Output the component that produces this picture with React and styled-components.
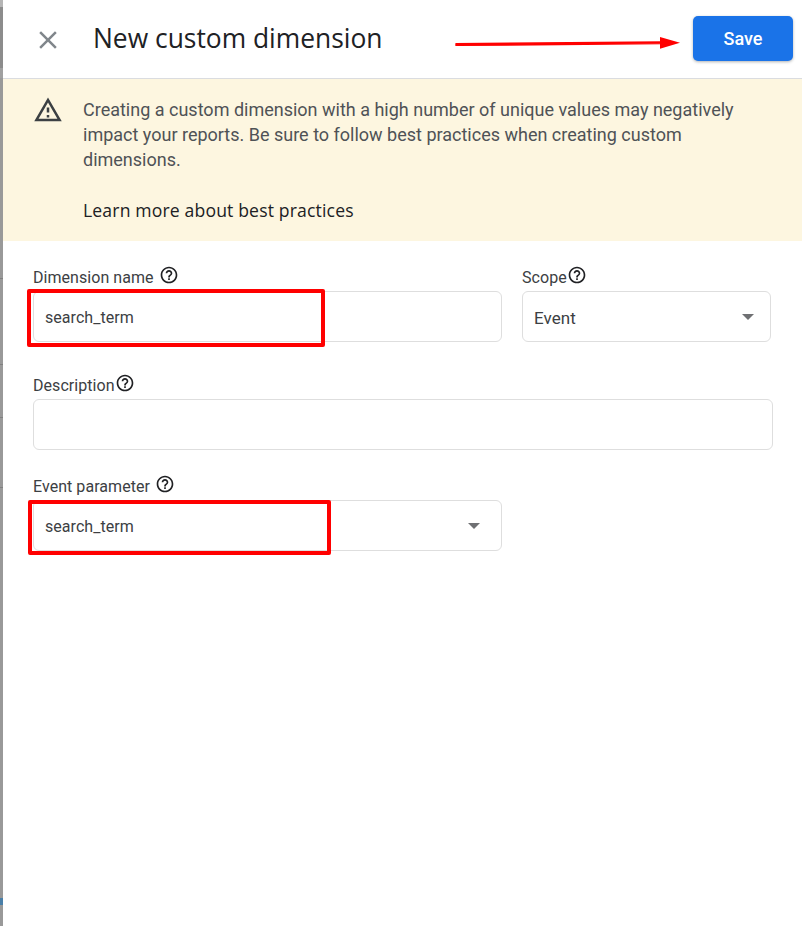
import styled, { createGlobalStyle } from "styled-components";

const GlobalStyle = createGlobalStyle`
  html, body {
    margin: 0;
    padding: 0;
    background: #ffffff;
    font-family: Roboto, "Liberation Sans", sans-serif;
  }
  * {
    box-sizing: border-box;
  }
`;

const HelpIcon = ({ className }) => (
  <svg className={className} width="20" height="20" viewBox="0 0 24 24" fill="#202124">
    <path d="M11 18h2v-2h-2v2zm1-16C6.48 2 2 6.48 2 12s4.48 10 10 10 10-4.48 10-10S17.52 2 12 2zm0 18c-4.41 0-8-3.59-8-8s3.59-8 8-8 8 3.59 8 8-3.59 8-8 8zm0-14c-2.21 0-4 1.79-4 4h2c0-1.1.9-2 2-2s2 .9 2 2c0 2-3 1.75-3 5h2c0-2.25 3-2.5 3-5 0-2.21-1.79-4-4-4z" />
  </svg>
);

const App = () => {
  return (
    <>
      <GlobalStyle />
      <Page>
        <Backdrop />
        <Panel>
          <Header>
            <CloseButton aria-label="Close">
              <svg width="30" height="30" viewBox="0 0 24 24" fill="#80868b">
                <path d="M19 6.41 17.59 5 12 10.59 6.41 5 5 6.41 10.59 12 5 17.59 6.41 19 12 13.41 17.59 19 19 17.59 13.41 12z" />
              </svg>
            </CloseButton>
            <Title>New custom dimension</Title>
            <SaveButton>Save</SaveButton>
          </Header>

          <Banner>
            <WarningIcon width="30" height="30" viewBox="0 0 24 24" fill="#3c4043">
              <path d="M12 5.99 19.53 19H4.47L12 5.99M12 2 1 21h22L12 2zm1 14h-2v2h2v-2zm0-6h-2v4h2v-4z" />
            </WarningIcon>
            <BannerBody>
              <BannerText>
                Creating a custom dimension with a high number of unique values may negatively
                impact your reports. Be sure to follow best practices when creating custom
                dimensions.
              </BannerText>
              <BannerLink>Learn more about best practices</BannerLink>
            </BannerBody>
          </Banner>

          <Form>
            <Row $gap="30px">
              <Field $width="469px">
                <Label>
                  Dimension name
                  <LabelHelp $gap="5px" />
                </Label>
                <Input>search_term</Input>
              </Field>
              <Field $width="249px">
                <Label>
                  Scope
                  <LabelHelp />
                </Label>
                <Input $size="17px">
                  Event
                  <Caret $right="16px" />
                </Input>
              </Field>
            </Row>
            <Row $gap="23px">
              <Field $width="740px">
                <Label>
                  Description
                  <LabelHelp />
                </Label>
                <Input />
              </Field>
            </Row>
            <Row>
              <Field $width="469px">
                <Label>
                  Event parameter
                  <LabelHelp $gap="5px" />
                </Label>
                <Input>
                  search_term
                  <Caret $right="21px" />
                </Input>
              </Field>
            </Row>
          </Form>
        </Panel>

        <Highlight $left="27px" $top="289px" $width="298px" $height="58px" />
        <Highlight $left="28px" $top="500px" $width="303px" $height="55px" />
        <Arrow width="240" height="24" viewBox="0 0 240 24">
          <path d="M2 13.6 L208 12 L208 13.6 L2 15.4 Z" fill="#ff0000" stroke="#ff0000" strokeWidth="1.4" strokeLinejoin="round" />
          <path d="M206 7 L226 12.7 L206 18.7 Z" fill="#ff0000" />
        </Arrow>
      </Page>
    </>
  );
};

export default App;

const Page = styled.div`
  position: relative;
  display: flex;
  width: 802px;
  height: 926px;
  overflow: hidden;
`;

const Backdrop = styled.div`
  flex: 0 0 3px;
  background:
    linear-gradient(#808080, #808080) 0 278px / 100% 1px no-repeat,
    linear-gradient(#808080, #808080) 0 364px / 100% 1px no-repeat,
    linear-gradient(#808080, #808080) 0 417px / 100% 1px no-repeat,
    linear-gradient(#808080, #808080) 0 487px / 100% 1px no-repeat,
    linear-gradient(#4a7fa8, #4a7fa8) 0 898px / 100% 7px no-repeat,
    linear-gradient(#b5b5b5, #b5b5b5) 0 0 / 100% 7px no-repeat,
    linear-gradient(#8c8c8c, #8c8c8c) 0 7px / 100% 61px no-repeat,
    linear-gradient(#a0a0a0, #a0a0a0) 0 68px / 100% 10px no-repeat,
    #999999;
`;

const Panel = styled.main`
  flex: 1;
  display: flex;
  flex-direction: column;
  background: #ffffff;
`;

const Header = styled.header`
  flex: 0 0 79px;
  display: flex;
  align-items: center;
  padding: 0 9px 2px 30px;
  border-bottom: 1px solid #dadce0;
`;

const CloseButton = styled.div`
  display: flex;
  width: 30px;
  height: 30px;
  margin-top: 3px;
`;

const Title = styled.h1`
  flex: 1;
  margin: 0 0 0 30px;
  font-family: "Open Sans", Roboto, sans-serif;
  font-size: 26.4px;
  font-weight: 400;
  color: #202124;
`;

const SaveButton = styled.button`
  width: 100px;
  height: 45px;
  border: none;
  border-radius: 5px;
  background: #1a73e8;
  box-shadow: 0 1px 3px rgba(60, 64, 67, 0.4);
  color: #ffffff;
  font-family: Roboto, sans-serif;
  font-size: 18px;
  font-weight: 500;
`;

const Banner = styled.section`
  flex: 0 0 162px;
  display: flex;
  padding: 16px 0 0 30px;
  background: #fdf6e0;
`;

const WarningIcon = styled.svg`
  flex: none;
`;

const BannerBody = styled.div`
  width: 670px;
  margin-left: 20px;
  padding-top: 2px;
`;

const BannerText = styled.p`
  margin: 0 0 26px;
  font-size: 18px;
  line-height: 25px;
  color: #4f5256;
`;

const BannerLink = styled.div`
  font-family: "Open Sans", Roboto, sans-serif;
  font-size: 17.6px;
  font-weight: 500;
  letter-spacing: 0.15px;
  line-height: 25px;
  color: #202124;
`;

const Form = styled.div`
  display: flex;
  flex-direction: column;
  padding: 23px 0 0 30px;
`;

const Row = styled.div`
  display: flex;
  gap: 20px;
  margin-bottom: ${(p) => p.$gap || "0"};
`;

const Field = styled.div`
  display: flex;
  flex-direction: column;
  width: ${(p) => p.$width};
`;

const Label = styled.label`
  display: flex;
  align-items: center;
  height: 27px;
  font-size: 16px;
  letter-spacing: 0.05px;
  color: #3c4043;
`;

const LabelHelp = styled(HelpIcon)`
  margin-left: ${(p) => p.$gap || "0"};
  margin-bottom: 5px;
`;

const Input = styled.div`
  position: relative;
  display: flex;
  align-items: center;
  height: 51px;
  padding: 2px 0 0 11px;
  border: 1px solid #dedede;
  border-radius: 6px;
  font-size: ${(p) => p.$size || "16px"};
  letter-spacing: 0.05px;
  color: #3c4043;
`;

const Caret = styled.span`
  position: absolute;
  right: ${(p) => p.$right};
  top: 22px;
  width: 0;
  height: 0;
  border-left: 6px solid transparent;
  border-right: 6px solid transparent;
  border-top: 6px solid #6f7073;
`;

const Highlight = styled.div`
  position: absolute;
  left: ${(p) => p.$left};
  top: ${(p) => p.$top};
  width: ${(p) => p.$width};
  height: ${(p) => p.$height};
  border: 4px solid #ff0000;
  border-radius: 2px;
`;

const Arrow = styled.svg`
  position: absolute;
  left: 454px;
  top: 30px;
`;
